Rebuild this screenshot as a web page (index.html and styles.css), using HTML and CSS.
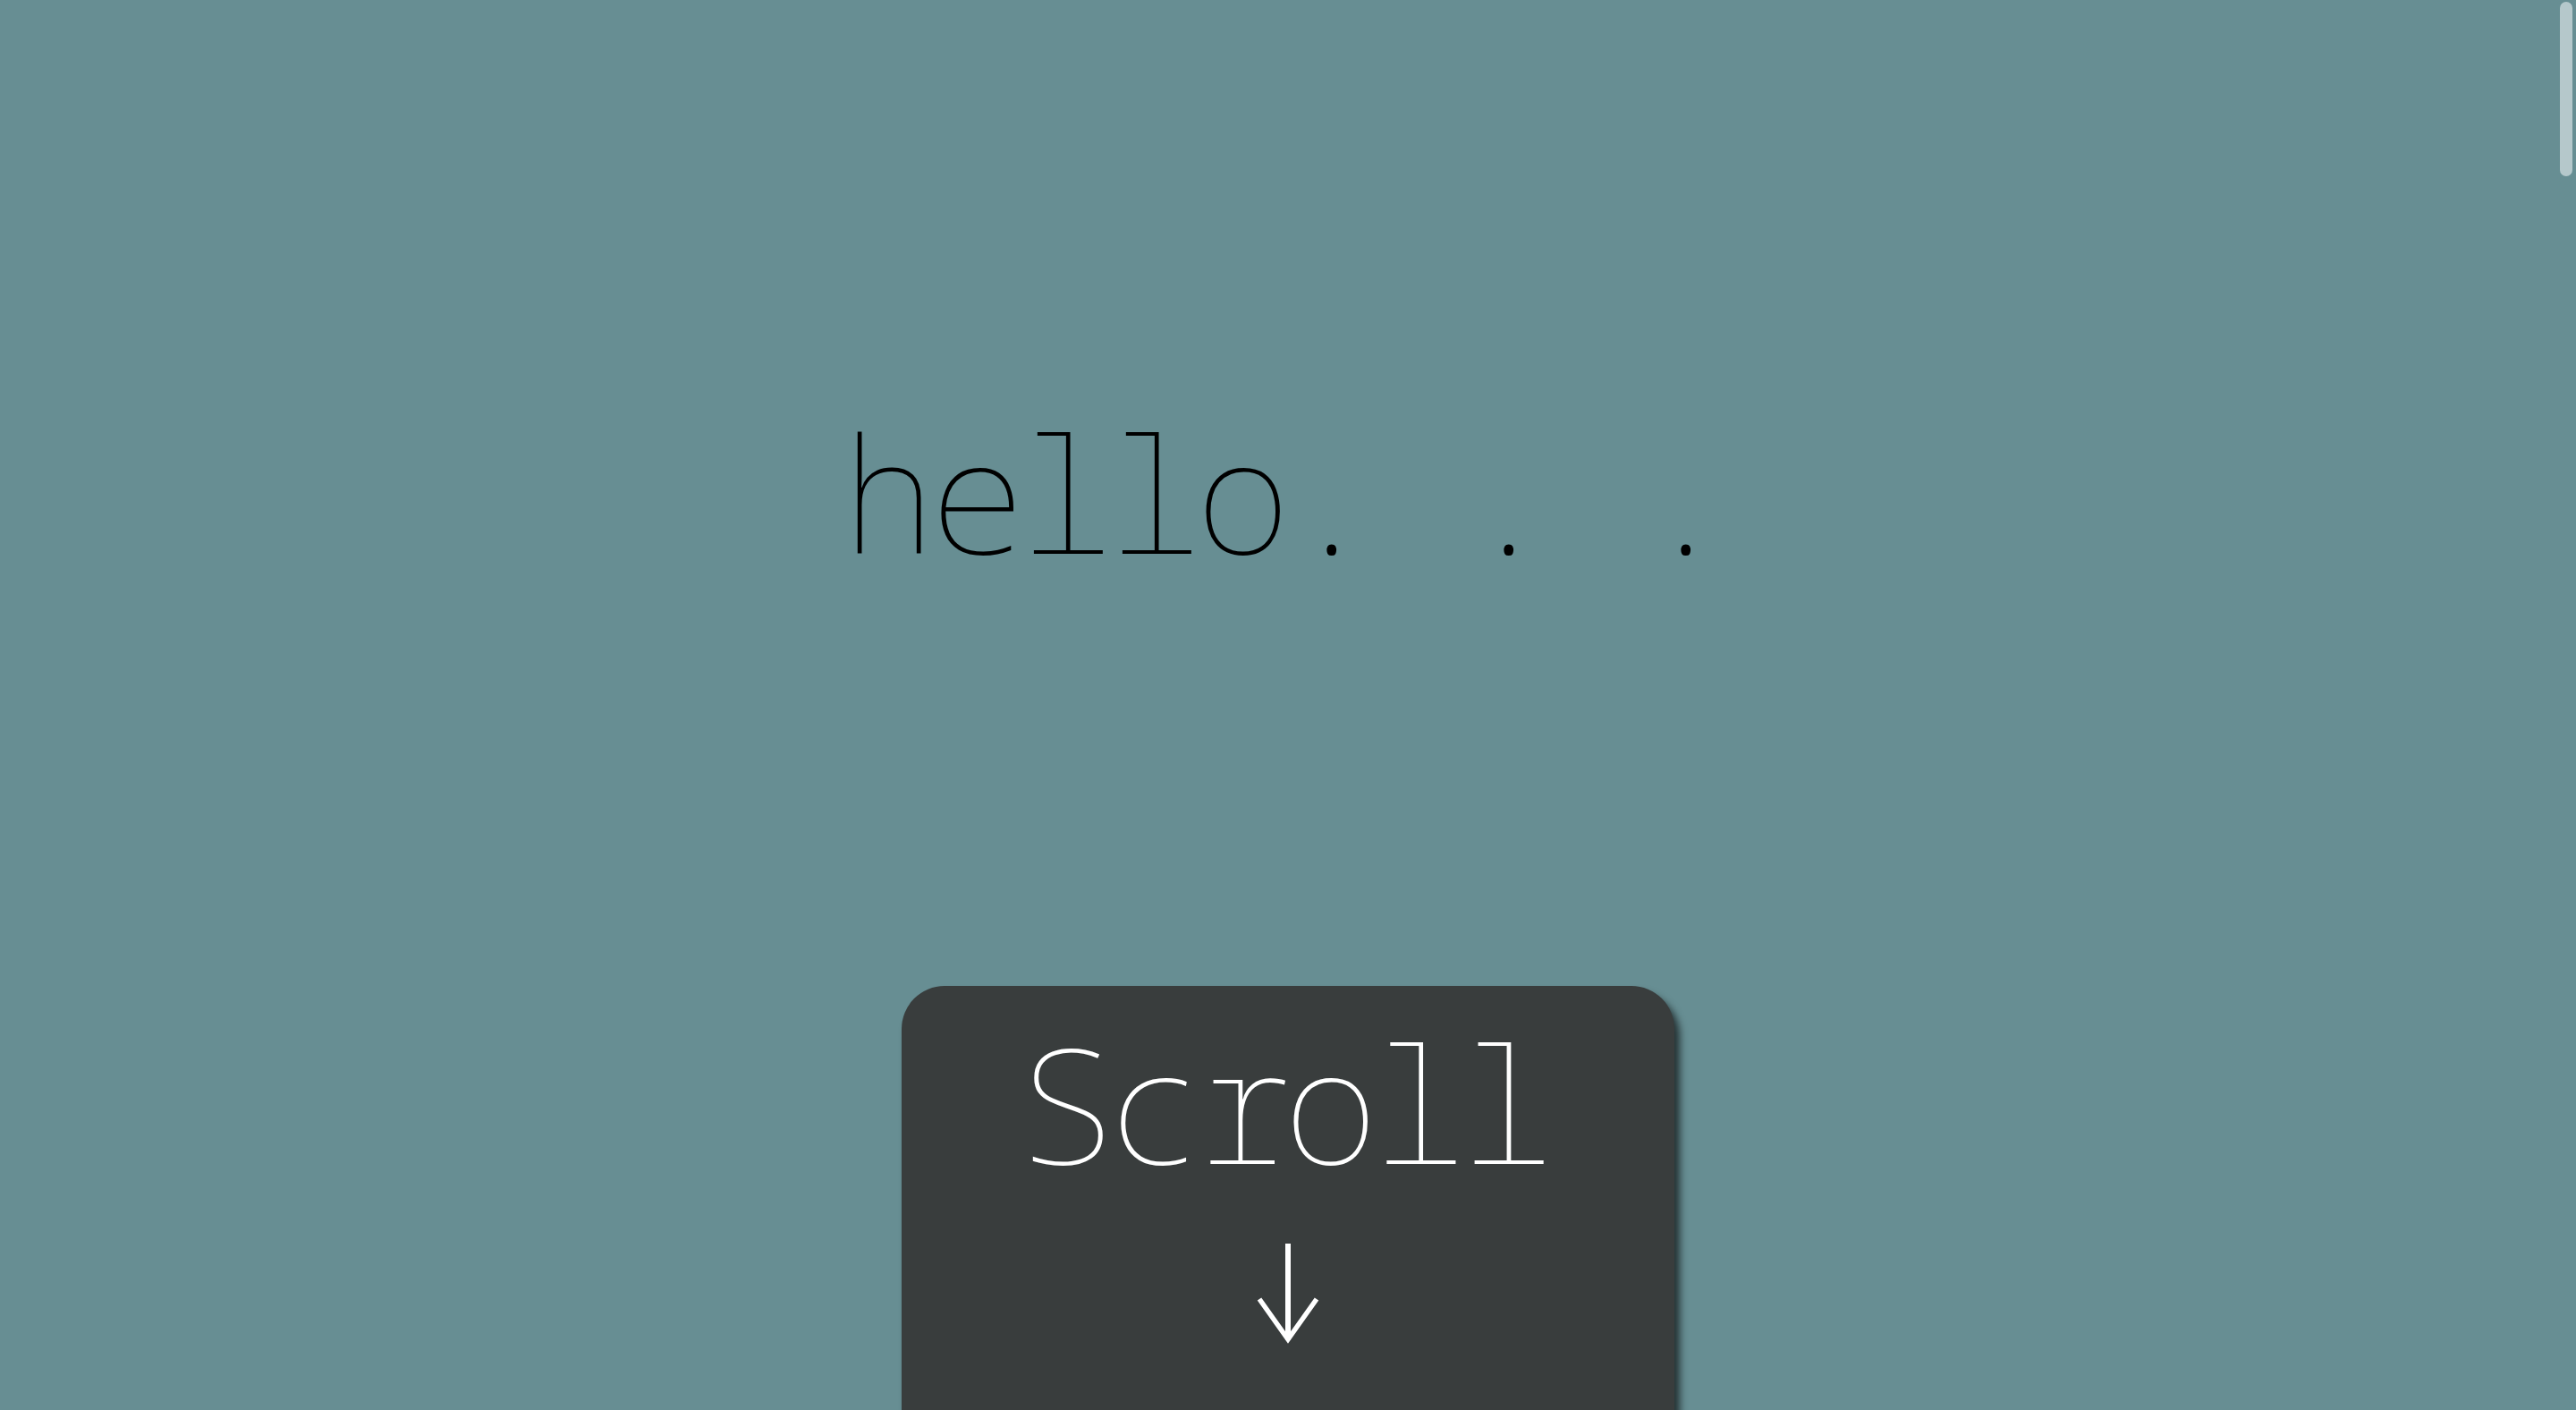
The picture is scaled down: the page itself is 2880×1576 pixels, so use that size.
FILE: index.html
```html
<!DOCTYPE html>
<html lang="en">
<head>
<meta charset="utf-8">
<title>hello</title>
<link rel="stylesheet" href="styles.css">
</head>
<body>
<main class="page">
  <section class="hero">
    <h1 class="greeting">hello. . .</h1>
  </section>
  <section class="scroll-card">
    <p class="scroll-label">Scroll</p>
    <svg class="scroll-arrow" viewBox="0 0 70 112" width="70" height="112" aria-hidden="true">
      <line x1="35" y1="0" x2="35" y2="108" stroke="#fff" stroke-width="6"/>
      <polyline points="3,62 35,107 67,62" fill="none" stroke="#fff" stroke-width="5.5" stroke-linejoin="miter"/>
    </svg>
  </section>
</main>
<div class="scroll-thumb"></div>
</body>
</html>
```
FILE: styles.css
```css
html, body {
  margin: 0;
  padding: 0;
  height: 100%;
  overflow: hidden;
}
body {
  background: #678e93;
  font-family: "Noto Sans Mono", "DejaVu Sans Mono", monospace;
}
.page {
  display: flex;
  flex-direction: column;
  align-items: center;
}
.hero {
  padding-top: 450px;
  height: 1102px;
  box-sizing: border-box;
  display: flex;
  justify-content: center;
  width: 100%;
}
.greeting {
  margin: 0;
  padding-right: 10px;
  font-size: 179px;
  line-height: 200px;
  font-weight: 150;
  letter-spacing: -8.4px;
  color: #000;
  white-space: pre;
}
.scroll-card {
  width: 864px;
  height: 700px;
  background: #393d3d;
  border-radius: 48px 48px 0 0;
  box-shadow: 6px 8px 8px rgba(0, 0, 0, 0.65);
  display: flex;
  flex-direction: column;
  align-items: center;
  padding-top: 30px;
  box-sizing: border-box;
}
.scroll-label {
  margin: 0;
  padding-right: 12px;
  font-size: 179px;
  line-height: 200px;
  font-weight: 150;
  letter-spacing: -9px;
  color: #fff;
  white-space: pre;
}
.scroll-arrow {
  display: block;
  margin-top: 58px;
}
.scroll-thumb {
  position: fixed;
  top: 2px;
  right: 4px;
  width: 14px;
  height: 195px;
  border-radius: 7px;
  background: #b5c8cb;
}
```
